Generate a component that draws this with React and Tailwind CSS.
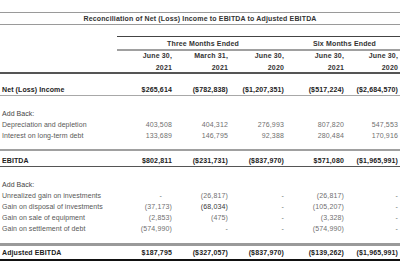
import React from "react";

const COLS = "grid grid-cols-[117px_56px_56px_60px_56px_55px]";
const PADS = ["pr-[1px]", "pr-[1px]", "pr-[5px]", "pr-[1px]", "pr-[2px]"];

const netRow = ["$265,614", "($782,838)", "($1,207,351)", "($517,224)", "($2,684,570)"];

const addBack1 = [
  ["Depreciation and depletion", ["403,508", "404,312", "276,993", "807,820", "547,553"]],
  ["Interest on long-term debt", ["133,689", "146,795", "92,388", "280,484", "170,916"]],
];

const ebitda = ["$802,811", "($231,731)", "($837,970)", "$571,080", "($1,965,991)"];

const addBack2 = [
  ["Unrealized gain on investments", ["-", "(26,817)", "-", "(26,817)", "-"]],
  ["Gain on disposal of investments", ["(37,173)", "(68,034)", "-", "(105,207)", "-"]],
  ["Gain on sale of equipment", ["(2,853)", "(475)", "-", "(3,328)", "-"]],
  ["Gain on settlement of debt", ["(574,990)", "-", "-", "(574,990)", "-"]],
];

const adjusted = ["$187,795", "($327,057)", "($837,970)", "($139,262)", "($1,965,991)"];

function Row({ label, values, bold, h = "h-[11px]", labelClass = "" }) {
  const text = bold ? "font-bold text-[#222]" : "text-[#707070]";
  return (
    <div className={`${COLS} ${h} items-center leading-[7px]`}>
      <div
        className={`pl-[2px] whitespace-nowrap ${
          bold ? "font-bold text-[#222] tracking-[0.1px]" : "text-[#585858] tracking-[0.05px]"
        } ${labelClass}`}
      >
        {label}
      </div>
      {values &&
        values.map((v, i) => (
          <div
            key={i}
            className={`text-right whitespace-nowrap ${text} ${
              v === "-" && i === 0 ? "pr-[11px]" : PADS[i]
            } ${v === "(68,034)" ? "!text-[#383838]" : ""}`}
          >
            {v}
          </div>
        ))}
    </div>
  );
}

export default function App() {
  return (
    <div className="w-[400px] h-[273px] bg-white overflow-hidden text-[7px] tracking-[0.15px] font-['Liberation_Sans',Arial,sans-serif]">
      <div className="h-[12px]" />
      <div className="h-[1px] bg-[#9a9a9a]" />
      <div className="h-[11px] flex items-center justify-center font-bold text-[#333] leading-[7px]">
        Reconciliation of Net (Loss) Income to EBITDA to Adjusted EBITDA
      </div>
      <div className="h-[1px] bg-[#9a9a9a]" />
      <div className="h-[11px]" />

      <div className={COLS}>
        <div />
        <div className="col-span-5 h-[1px] bg-[#444]" />
      </div>
      <div className={`${COLS} h-[12px] items-center leading-[7px] font-bold text-[#333]`}>
        <div />
        <div className="col-span-3 text-center">Three Months Ended</div>
        <div className="col-span-2 text-center">Six Months Ended</div>
      </div>
      <div className={COLS}>
        <div />
        <div className="col-span-5 h-[2px] bg-[#a0a0a0]" />
      </div>

      <div className={`${COLS} h-[8px] items-center leading-[7px] font-bold text-[#333]`}>
        <div />
        {["June 30,", "March 31,", "June 30,", "June 30,", "June 30,"].map((v, i) => (
          <div key={i} className={`text-right ${PADS[i]}`}>{v}</div>
        ))}
      </div>
      <div className={`${COLS} h-[13px] items-end pb-[1px] leading-[7px] font-bold text-[#333]`}>
        <div />
        {["2021", "2021", "2020", "2021", "2020"].map((v, i) => (
          <div key={i} className={`text-right ${PADS[i]}`}>{v}</div>
        ))}
      </div>
      <div className="h-[2px] bg-[#555]" />

      <div className="h-[10px]" />
      <Row label="Net (Loss) Income" values={netRow} bold />
      <div className="h-[1px] bg-[#a8a8a8]" />

      <div className="h-[12px]" />
      <Row label="Add Back:" labelClass="!text-[#444]" />
      {addBack1.map(([l, v]) => (
        <Row key={l} label={l} values={v} />
      ))}
      <div className="h-[8px]" />
      <div className="h-[2px] bg-[#a0a0a0]" />

      <div className="h-[4px]" />
      <Row label="EBITDA" values={ebitda} bold />
      <div className="h-[1px] bg-[#555]" />

      <div className="h-[12px]" />
      <Row label="Add Back:" labelClass="!text-[#444]" />
      {addBack2.map(([l, v]) => (
        <Row key={l} label={l} values={v} />
      ))}
      <div className="h-[9px]" />
      <div className="h-[3px] bg-[#9a9a9a]" />

      <Row label="Adjusted EBITDA" values={adjusted} bold h="h-[13px]" />
      <div className="h-[2px] bg-[#111]" />
    </div>
  );
}
